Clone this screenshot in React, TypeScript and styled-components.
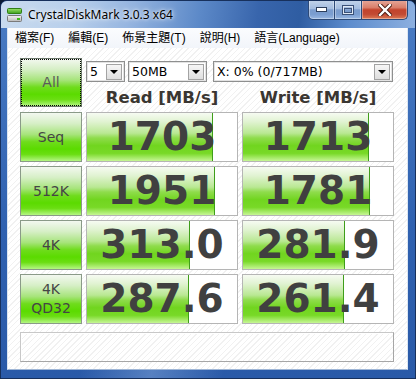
import React from "react";
import styled, { createGlobalStyle } from "styled-components";

const Global = createGlobalStyle`
  html, body { margin: 0; padding: 0; background: #0b1a33; }
  body { width: 416px; height: 379px; overflow: hidden; }
  #root { width: 416px; height: 379px; }
  * { box-sizing: border-box; }
`;

const Window = styled.div`
  width: 416px;
  height: 379px;
  border: 1px solid #17305c;
  border-radius: 7px 7px 0 0;
  display: flex;
  flex-direction: column;
  overflow: hidden;
  background:
    linear-gradient(100deg, rgba(255,255,255,0) 30%, rgba(170,200,240,0.35) 45%, rgba(255,255,255,0) 60%),
    linear-gradient(to bottom, #4a7cc4 0%, #2f61b0 60%, #2a5aa8 100%);
`;

const TitleBar = styled.div`
  height: 27px;
  flex: none;
  display: flex;
  align-items: flex-start;
  padding-left: 6px;
  background: linear-gradient(
    98deg,
    #c9dbef 0%,
    #b8cfeb 18%,
    #93b3df 32%,
    #5c89c8 48%,
    #3865ac 62%,
    #2f5da2 72%,
    #5d8ccd 84%,
    #8db0e0 100%
  );
`;

const TitleIcon = styled.svg`
  margin-top: 6px;
  flex: none;
`;

const TitleText = styled.div`
  margin-left: 5px;
  margin-top: 5px;
  font-family: "Noto Sans", "DejaVu Sans", sans-serif;
  font-size: 12px;
  line-height: 17px;
  color: #000;
  text-shadow: 0 0 6px rgba(255, 255, 255, 0.95), 0 0 3px rgba(255, 255, 255, 0.9);
`;

const Caption = styled.div`
  margin-left: auto;
  margin-right: 7px;
  margin-top: -1px;
  display: flex;
`;

const CaptionButton = styled.div<{ $kind: "min" | "max" | "close" }>`
  height: 20px;
  width: ${(p) => (p.$kind === "min" ? 27 : p.$kind === "max" ? 28 : 47)}px;
  display: flex;
  align-items: center;
  justify-content: center;
  border: 1px solid #2d4a78;
  border-top: none;
  margin-left: ${(p) => (p.$kind === "min" ? 0 : -1)}px;
  border-radius: ${(p) =>
    p.$kind === "min" ? "0 0 0 5px" : p.$kind === "close" ? "0 0 5px 0" : "0"};
  box-shadow: inset 0 0 0 1px rgba(255, 255, 255, 0.35);
  background: ${(p) =>
    p.$kind === "close"
      ? "linear-gradient(to bottom, #e6a99b 0%, #d97e6a 40%, #c3432c 52%, #c24a33 75%, #dc7a55 100%)"
      : "linear-gradient(to bottom, #c3d4ea 0%, #a4bde0 45%, #7b9ccd 52%, #7a9dd0 75%, #9ab8e2 100%)"};
`;

const MainBody = styled.div`
  flex: 1;
  display: flex;
  flex-direction: column;
  margin: 0 7px 8px 6px;
  border: 1px solid #dce6f2;
  border-top: none;
  border-bottom-color: #9fb6d6;
`;

const MenuBar = styled.div`
  height: 20px;
  flex: none;
  display: flex;
  align-items: center;
  background: linear-gradient(to bottom, #fbfcfe 0%, #f2f5fa 100%);
  font-family: "Liberation Sans", "Noto Sans CJK TC", sans-serif;
  font-size: 12px;
  color: #000;
`;

const MenuItem = styled.span`
  padding: 0 7px;
  line-height: 20px;
  white-space: nowrap;
`;

const Client = styled.div`
  flex: 1;
  display: flex;
  flex-direction: column;
  padding: 10px 13px 7px 12px;
  background: repeating-linear-gradient(
    135deg,
    #ffffff 0px,
    #ffffff 3px,
    #f1f1f1 3px,
    #f1f1f1 4px
  );
`;

const TopRow = styled.div`
  display: flex;
  gap: 4px;
  height: 49px;
`;

const GreenButton = styled.div<{ $focus?: boolean }>`
  width: 62px;
  height: ${(p) => (p.$focus ? 49 : 50)}px;
  display: flex;
  flex-direction: column;
  align-items: center;
  justify-content: center;
  border: 1px solid ${(p) => (p.$focus ? "#6a766a" : "#8a9a88")};
  outline: ${(p) => (p.$focus ? "1px dotted #000" : "none")};
  outline-offset: -2px;
  background: linear-gradient(
    to bottom,
    #f3f8f0 0%,
    #d6efc6 22%,
    #a6e47a 45%,
    #6fdc1c 60%,
    #5bdb00 75%,
    #6ade12 86%,
    #b4f683 100%
  );
  font-family: "DejaVu Sans", sans-serif;
  font-size: 14px;
  line-height: 19px;
  color: ${(p) => (p.$focus ? "#5a5a5a" : "#454545")};
`;

const Controls = styled.div`
  width: 308px;
  display: flex;
  flex-direction: column;
`;

const SelectRow = styled.div`
  display: flex;
  margin-top: 3px;
  height: 21px;
`;

const Combo = styled.div<{ $w: number; $gap: number }>`
  width: ${(p) => p.$w}px;
  margin-left: ${(p) => p.$gap}px;
  height: 21px;
  display: flex;
  align-items: center;
  background: #fff;
  border: 1px solid #8e8f8f;
  box-shadow: inset 0 0 0 1px #e3e3e3;
  padding: 0 2px 0 3px;
  font-family: "DejaVu Sans", sans-serif;
  font-size: 12.5px;
  color: #000;
`;

const ComboText = styled.span`
  flex: 1;
  white-space: nowrap;
  overflow: hidden;
`;

const ComboArrow = styled.span`
  width: 16px;
  height: 16px;
  display: flex;
  align-items: center;
  justify-content: center;
  border: 1px solid #a3a3a3;
  background: linear-gradient(to bottom, #f6f6f6, #dedede);
  &::after {
    content: "";
    border-left: 4px solid transparent;
    border-right: 4px solid transparent;
    border-top: 4px solid #000;
    margin-top: 1px;
  }
`;

const Headers = styled.div`
  display: grid;
  grid-template-columns: 152px 152px;
  column-gap: 4px;
  margin-top: 6px;
`;

const Header = styled.div`
  text-align: center;
  font-family: "DejaVu Sans", sans-serif;
  font-weight: bold;
  font-size: 16.5px;
  line-height: 19px;
  color: #3a3631;
  white-space: nowrap;
`;

const ResultGrid = styled.div`
  margin-top: 5px;
  display: grid;
  grid-template-columns: 62px 152px 152px;
  grid-auto-rows: 50px;
  gap: 4px;
`;

const ResultBox = styled.div`
  border: 1px solid #b5b5b5;
  background-color: #fff;
  background-image: linear-gradient(#3f9e1a, #3f9e1a),
    linear-gradient(
      to bottom,
      #f6fbf2 0%,
      #e1f3d2 18%,
      #b9e893 42%,
      #8fdc4c 52%,
      #71d51f 68%,
      #78d927 84%,
      #c6f695 100%
    );
  background-repeat: no-repeat;
  display: flex;
  align-items: center;
  justify-content: center;
  font-family: "DejaVu Sans", sans-serif;
  font-weight: bold;
  font-size: 39px;
  line-height: 48px;
  color: #404040;
  white-space: nowrap;
  overflow: hidden;
`;

const Comment = styled.div`
  margin-top: 8px;
  height: 30px;
  border: 1px solid #a6a6a6;
  border-top-color: #c8c8c8;
  border-left-color: #c8c8c8;
  box-shadow: inset 1px 1px 0 #fff;
`;

type Row = { label: string[]; read: string; write: string };

const rows: Row[] = [
  { label: ["Seq"], read: "1703", write: "1713" },
  { label: ["512K"], read: "1951", write: "1781" },
  { label: ["4K"], read: "313.0", write: "281.9" },
  { label: ["4K", "QD32"], read: "287.6", write: "261.4" },
];

const barWidth = (v: string) => Math.round(31.3 * Math.log10(parseFloat(v)) + 24.9);

const Result: React.FC<{ value: string }> = ({ value }) => {
  const w = barWidth(value);
  return (
    <ResultBox
      style={{
        backgroundSize: `1px 100%, ${w}px 100%`,
        backgroundPosition: `${w - 1}px 0, 0 0`,
      }}
    >
      {value}
    </ResultBox>
  );
};

const DiskIcon = () => (
  <TitleIcon width="16" height="16" viewBox="0 0 16 16">
    <defs>
      <linearGradient id="gt" x1="0" y1="0" x2="0" y2="1">
        <stop offset="0" stopColor="#9be36a" />
        <stop offset="1" stopColor="#3c9f1c" />
      </linearGradient>
      <linearGradient id="gb" x1="0" y1="0" x2="0" y2="1">
        <stop offset="0" stopColor="#f4f4f4" />
        <stop offset="1" stopColor="#b9b9b9" />
      </linearGradient>
    </defs>
    <rect x="0.5" y="1.5" width="14" height="5" rx="1" fill="url(#gt)" stroke="#2f7f14" />
    <rect x="0.5" y="8.5" width="14" height="6" rx="1" fill="url(#gb)" stroke="#7a7a7a" />
    <rect x="10" y="11" width="3" height="2" fill="#42b81e" />
  </TitleIcon>
);

export default function App() {
  return (
    <>
      <Global />
      <Window>
        <TitleBar>
          <DiskIcon />
          <TitleText>CrystalDiskMark 3.0.3 x64</TitleText>
          <Caption>
            <CaptionButton $kind="min">
              <svg width="11" height="5" viewBox="0 0 11 5">
                <rect x="0.5" y="0.5" width="10" height="4" fill="#fff" stroke="#2c3e5c" />
              </svg>
            </CaptionButton>
            <CaptionButton $kind="max">
              <svg width="12" height="10" viewBox="0 0 12 10">
                <rect x="0.5" y="0.5" width="11" height="9" fill="none" stroke="#3a5077" />
                <rect x="1.5" y="1.5" width="9" height="7" fill="none" stroke="#dfe8f5" />
                <rect x="2.5" y="3.5" width="7" height="4" fill="none" stroke="#3a5077" />
              </svg>
            </CaptionButton>
            <CaptionButton $kind="close">
              <svg width="14" height="12" viewBox="0 0 14 12">
                <path d="M2 1 L12 11 M12 1 L2 11" stroke="#4a1a10" strokeWidth="4.2" strokeLinecap="square" />
                <path d="M2 1 L12 11 M12 1 L2 11" stroke="#fff" strokeWidth="2.4" strokeLinecap="square" />
              </svg>
            </CaptionButton>
          </Caption>
        </TitleBar>
        <MainBody>
          <MenuBar>
            <MenuItem>檔案(F)</MenuItem>
            <MenuItem>編輯(E)</MenuItem>
            <MenuItem>佈景主題(T)</MenuItem>
            <MenuItem>說明(H)</MenuItem>
            <MenuItem>語言(Language)</MenuItem>
          </MenuBar>
          <Client>
            <TopRow>
              <GreenButton $focus>All</GreenButton>
              <Controls>
                <SelectRow>
                  <Combo $w={39} $gap={0}>
                    <ComboText>5</ComboText>
                    <ComboArrow />
                  </Combo>
                  <Combo $w={79} $gap={3}>
                    <ComboText>50MB</ComboText>
                    <ComboArrow />
                  </Combo>
                  <Combo $w={180} $gap={6}>
                    <ComboText>X: 0% (0/717MB)</ComboText>
                    <ComboArrow />
                  </Combo>
                </SelectRow>
                <Headers>
                  <Header>Read [MB/s]</Header>
                  <Header>Write [MB/s]</Header>
                </Headers>
              </Controls>
            </TopRow>
            <ResultGrid>
              {rows.map((r) => (
                <React.Fragment key={r.label.join("-")}>
                  <GreenButton>
                    {r.label.map((l) => (
                      <span key={l}>{l}</span>
                    ))}
                  </GreenButton>
                  <Result value={r.read} />
                  <Result value={r.write} />
                </React.Fragment>
              ))}
            </ResultGrid>
            <Comment />
          </Client>
        </MainBody>
      </Window>
    </>
  );
}
